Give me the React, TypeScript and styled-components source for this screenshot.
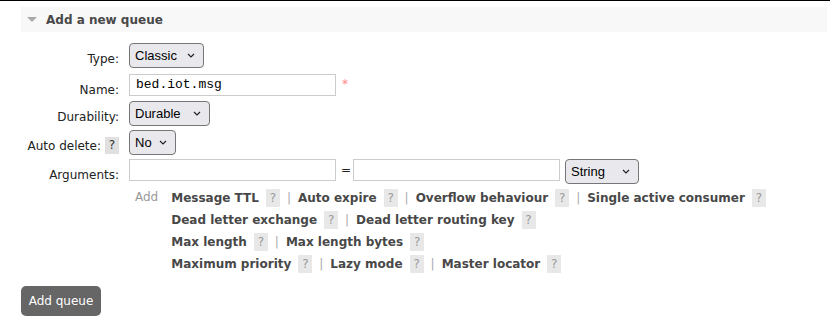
import React from 'react';
import styled, { createGlobalStyle } from 'styled-components';

const GlobalStyle = createGlobalStyle`
  body {
    margin: 0;
    background: #fff;
    font-family: 'DejaVu Sans', Verdana, sans-serif;
    font-size: 12px;
    color: #484848;
    border-top: 1px solid #000;
  }
`;

const Page = styled.div`
  padding: 6px 3px 0 21px;
`;

const SectionHeader = styled.h2`
  margin: 0;
  height: 25px;
  background: #f8f8f8;
  display: flex;
  align-items: center;
  gap: 9px;
  padding-left: 6px;
  font-size: 12px;
  font-weight: bold;
  color: #484848;
`;

const Triangle = styled.span`
  width: 0;
  height: 0;
  border-left: 5px solid transparent;
  border-right: 5px solid transparent;
  border-top: 5px solid #aaa;
`;

const Form = styled.div`
  margin-left: -21px;
  padding-top: 11px;
`;

const Row = styled.div<{ $h: number }>`
  display: grid;
  grid-template-columns: 119px 1fr;
  column-gap: 10px;
  height: ${p => p.$h}px;
  align-items: start;
`;

const Label = styled.label`
  display: flex;
  justify-content: flex-end;
  align-items: center;
  gap: 4px;
  height: 31px;
  color: #222;
`;

const Controls = styled.div`
  display: flex;
  align-items: flex-start;
  gap: 5px;
`;

const Select = styled.div<{ $w: number }>`
  box-sizing: border-box;
  width: ${p => p.$w}px;
  height: 25px;
  border: 1px solid #767676;
  border-radius: 4px;
  background: #e9e9ed;
  display: flex;
  align-items: center;
  justify-content: space-between;
  padding: 0 8px 0 5px;
  font-family: 'Liberation Sans', Arial, sans-serif;
  font-size: 13px;
  color: #000;
`;

const Chevron = () => (
  <svg width="8" height="5" viewBox="0 0 8 5">
    <path d="M1 1l3 3 3-3" fill="none" stroke="#222" strokeWidth="1.2" />
  </svg>
);

const Input = styled.div`
  box-sizing: border-box;
  width: 207px;
  height: 22px;
  border: 1px solid #ccc;
  padding: 0 6px;
  line-height: 20px;
  font-family: 'Liberation Mono', 'Courier New', monospace;
  font-size: 13px;
  color: #000;
`;

const Required = styled.span`
  color: #f88;
  font-size: 12px;
  line-height: 20px;
  margin-left: 1px;
`;

const Equals = styled.span`
  line-height: 22px;
  color: #222;
  width: 7px;
  text-align: center;
`;

const Help = styled.span<{ $dark?: boolean }>`
  display: inline-block;
  width: 14px;
  height: ${p => (p.$dark ? 17 : 18)}px;
  line-height: ${p => (p.$dark ? 17 : 18)}px;
  text-align: center;
  background: ${p => (p.$dark ? '#e0e0e0' : '#e8e8e8')};
  color: ${p => (p.$dark ? '#333' : '#999')};
  font-weight: normal;
`;

const ArgsArea = styled.div`
  display: grid;
  grid-template-columns: 119px auto 1fr;
  padding-top: 4px;
`;

const AddText = styled.span`
  grid-column: 2;
  color: #999;
  padding: 0 13px 0 16px;
  line-height: 18px;
  margin-top: -1px;
`;

const LinkList = styled.div`
  grid-column: 3;
  display: flex;
  flex-direction: column;
  gap: 4px;
`;

const LinkLine = styled.div`
  display: flex;
  align-items: center;
  gap: 7px;
  height: 18px;
`;

const ArgLink = styled.span`
  font-weight: bold;
  color: #484848;
`;

const Sep = styled.span`
  color: #aaa;
`;

const Button = styled.button`
  margin-top: 13px;
  height: 30px;
  width: 80px;
  padding: 0;
  background: #666;
  color: #fff;
  border: none;
  border-radius: 5px;
  font-family: 'DejaVu Sans', Verdana, sans-serif;
  font-size: 12px;
`;

const argLines = [
  ['Message TTL', 'Auto expire', 'Overflow behaviour', 'Single active consumer'],
  ['Dead letter exchange', 'Dead letter routing key'],
  ['Max length', 'Max length bytes'],
  ['Maximum priority', 'Lazy mode', 'Master locator'],
];

export default function App() {
  return (
    <>
      <GlobalStyle />
      <Page>
        <SectionHeader>
          <Triangle />
          Add a new queue
        </SectionHeader>
        <Form>
          <Row $h={31}>
            <Label>Type:</Label>
            <Controls>
              <Select $w={75}>
                Classic <Chevron />
              </Select>
            </Controls>
          </Row>
          <Row $h={27}>
            <Label>Name:</Label>
            <Controls>
              <Input>bed.iot.msg</Input>
              <Required>*</Required>
            </Controls>
          </Row>
          <Row $h={29}>
            <Label>Durability:</Label>
            <Controls>
              <Select $w={81}>
                Durable <Chevron />
              </Select>
            </Controls>
          </Row>
          <Row $h={29}>
            <Label>
              Auto delete: <Help $dark>?</Help>
            </Label>
            <Controls>
              <Select $w={47}>
                No <Chevron />
              </Select>
            </Controls>
          </Row>
          <Row $h={26}>
            <Label>Arguments:</Label>
            <Controls>
              <Input />
              <Equals>=</Equals>
              <Input />
              <Select $w={74}>
                String <Chevron />
              </Select>
            </Controls>
          </Row>
          <ArgsArea>
            <span />
            <AddText>Add</AddText>
            <LinkList>
              {argLines.map((line, i) => (
                <LinkLine key={i}>
                  {line.map((name, j) => (
                    <React.Fragment key={name}>
                      {j > 0 && <Sep>|</Sep>}
                      <ArgLink>{name}</ArgLink>
                      <Help>?</Help>
                    </React.Fragment>
                  ))}
                </LinkLine>
              ))}
            </LinkList>
          </ArgsArea>
        </Form>
        <Button>Add queue</Button>
      </Page>
    </>
  );
}
